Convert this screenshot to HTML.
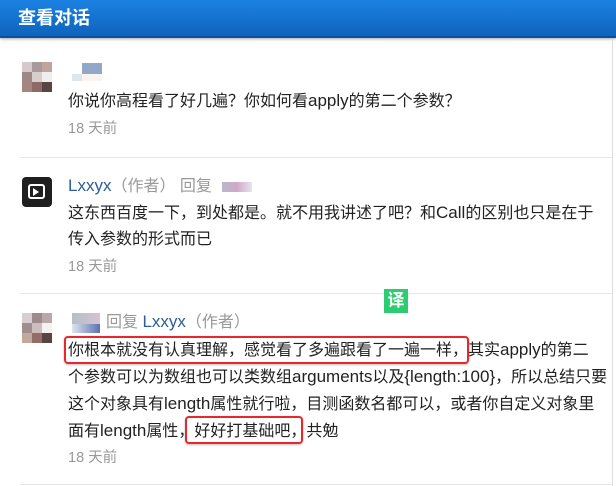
<!DOCTYPE html>
<html><head><meta charset="utf-8"><style>
*{margin:0;padding:0;box-sizing:border-box}
body{width:616px;height:486px;background:#fff;position:relative;overflow:hidden;font-family:"Liberation Sans","Noto Sans CJK SC",sans-serif;color:#222}
.hd{position:absolute;left:0;top:0;width:616px;height:38px;background:linear-gradient(#1c82e2,#0f63bd);border-bottom:2px solid #0b4f9a;box-shadow:0 1px 3px rgba(0,0,0,.35)}
.hd span{position:absolute;left:18px;top:6px;font-size:18px;font-weight:bold;color:#fff;line-height:24px}
.t{position:absolute;left:68px;font-size:16px;line-height:22px;white-space:nowrap;color:#222}
.t l{font-size:17px}
.tm{position:absolute;left:68px;font-size:14.5px;color:#999;line-height:20px}
.dv{position:absolute;left:20px;width:592px;height:1px;background:#e6e6e6}
.av{position:absolute;left:22px;width:30px;height:30px;display:grid;grid-template-columns:repeat(3,10px);grid-template-rows:repeat(3,10px)}
.nm{position:absolute;font-size:16px;line-height:22px;white-space:nowrap}
.nm l{font-size:17px}
.b{color:#2d5d9b}.g{color:#999}
.box{position:absolute;border:2.5px solid #e8262b;border-radius:4px;box-shadow:0 1px 2px rgba(0,0,0,.25)}
.vr{position:absolute;left:612px;top:40px;width:1px;height:446px;background:#ddd}
</style></head><body>
<div class="hd"><span>查看对话</span></div>
<div class="vr"></div>

<div class="av" style="top:62px">
<i style="background:#d5c9cd"></i><i style="background:#a89a9c"></i><i style="background:#c0a39d"></i>
<i style="background:#9e8886"></i><i style="background:#d8cdcc"></i><i style="background:#eee"></i>
<i style="background:#a48580"></i><i style="background:#8e6a66"></i><i style="background:#5a4443"></i></div>
<div style="position:absolute;left:82px;top:63px;width:20px;height:11px;background:#93a8c8"></div>
<div style="position:absolute;left:72px;top:74px;width:10px;height:7px;background:#dde6ee"></div>
<div style="position:absolute;left:82px;top:74px;width:20px;height:7px;background:#fbf3ee"></div>
<div class="t" style="top:90px">你说你高程看了好几遍？你如何看<l>apply</l>的第二个参数？</div>
<div class="tm" style="top:119px">18 天前</div>
<div class="dv" style="top:157px"></div>

<div style="position:absolute;left:22px;top:177px;width:30px;height:30px;background:#1f1f1f;border-radius:4px">
<div style="position:absolute;left:6px;top:7px;width:17px;height:15px;border:2.5px solid #fff;border-radius:3px"></div>
<div style="position:absolute;left:11px;top:11px;width:0;height:0;border-left:6px solid #fff;border-top:4px solid transparent;border-bottom:4px solid transparent"></div></div>
<div class="nm" style="left:68px;top:175px"><span class="b"><l>Lxxyx</l></span><span class="g">（作者） 回复</span></div>
<div style="position:absolute;left:222px;top:182px;width:30px;height:10px;background:linear-gradient(90deg,#bbb8cc,#cfa9c6,#e8e4ee)"></div>
<div class="t" style="top:202px">这东西百度一下，到处都是。就不用我讲述了吧？和<l>Call</l>的区别也只是在于</div>
<div class="t" style="top:229px">传入参数的形式而已</div>
<div class="tm" style="top:257px">18 天前</div>
<div class="dv" style="top:293px"></div>

<div style="position:absolute;left:384px;top:289px;width:24px;height:24px;background:#2ecc71;color:#fff;font-size:17px;font-weight:bold;text-align:center;line-height:24px">译</div>

<div class="av" style="top:313px">
<i style="background:#d8cdd0"></i><i style="background:#9c8a8f"></i><i style="background:#b7a8ab"></i>
<i style="background:#a08d8d"></i><i style="background:#cdbdbd"></i><i style="background:#f4f1f1"></i>
<i style="background:#c2a79c"></i><i style="background:#946d68"></i><i style="background:#5a4443"></i></div>
<div style="position:absolute;left:72px;top:313px;width:28px;height:11px;background:linear-gradient(90deg,#b5bec9,#d7c3d0)"></div>
<div style="position:absolute;left:72px;top:324px;width:28px;height:9px;background:linear-gradient(90deg,#dce6ef,#5c72b0)"></div>
<div class="nm" style="left:106px;top:311px"><span class="g">回复 </span><span class="b"><l>Lxxyx</l></span><span class="g">（作者）</span></div>
<div class="t" style="top:339px">你根本就没有认真理解，感觉看了多遍跟看了一遍一样，其实<l>apply</l>的第二</div>
<div class="t" style="top:366px">个参数可以为数组也可以类数组<l>arguments</l>以及<l>{length:100}</l>，所以总结只要</div>
<div class="t" style="top:393px">这个对象具有<l>length</l>属性就行啦，目测函数名都可以，或者你自定义对象里</div>
<div class="t" style="top:420px">面有<l>length</l>属性，好好打基础吧，共勉</div>
<div class="box" style="left:64px;top:336px;width:405px;height:28px"></div>
<div class="box" style="left:185px;top:416px;width:118px;height:28px"></div>
<div class="tm" style="top:448px">18 天前</div>
<div class="dv" style="top:484px"></div>
</body></html>
